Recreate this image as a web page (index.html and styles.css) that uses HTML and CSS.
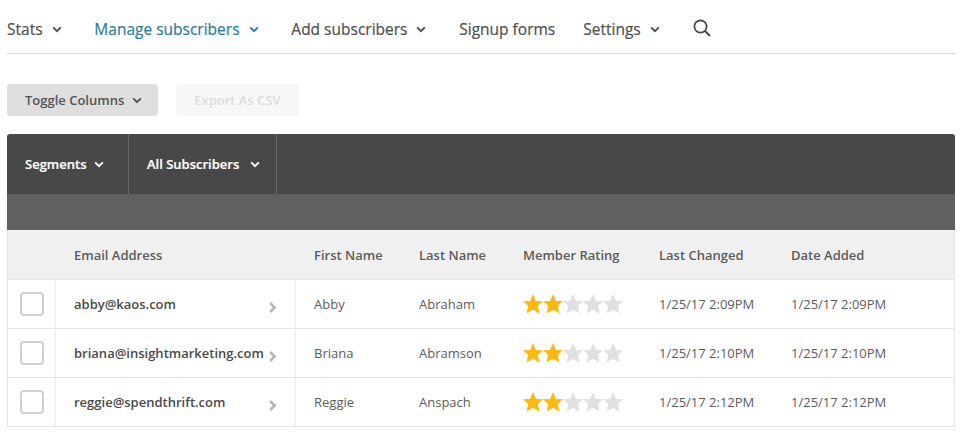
FILE: index.html
```html
<!DOCTYPE html>
<html lang="en">
<head>
<meta charset="utf-8">
<title>Manage subscribers</title>
<link rel="stylesheet" href="styles.css">
</head>
<body>
<svg class="defs" width="0" height="0" aria-hidden="true">
  <symbol id="chev" viewBox="0 0 10 7"><path d="M1.2 1.4 5 5.2 8.8 1.4" fill="none" stroke="currentColor" stroke-width="2"/></symbol>
  <symbol id="star" viewBox="0 0 20 20"><polygon points="10,0 13,6.9 20,7.2 14.8,12 16.5,19.6 10,15.7 3.5,19.6 5.2,12 0,7.2 7,6.9" fill="currentColor"/></symbol>
  <symbol id="right" viewBox="0 0 8 11"><path d="M1.2 1 5.7 5.5 1.2 10" fill="none" stroke="currentColor" stroke-width="2.5"/></symbol>
</svg>
<nav class="nav">
  <a class="nav-item">Stats<svg class="chev"><use href="#chev"/></svg></a>
  <a class="nav-item active">Manage subscribers<svg class="chev"><use href="#chev"/></svg></a>
  <a class="nav-item">Add subscribers<svg class="chev"><use href="#chev"/></svg></a>
  <a class="nav-item">Signup forms</a>
  <a class="nav-item">Settings<svg class="chev"><use href="#chev"/></svg></a>
  <svg class="search" viewBox="0 0 18 18"><circle cx="7.5" cy="7.5" r="6.1" fill="none" stroke="currentColor" stroke-width="1.7"/><path d="M12 12l5 5" stroke="currentColor" stroke-width="1.9" fill="none"/></svg>
</nav>
<div class="actions">
  <button class="btn">Toggle Columns<svg class="chev"><use href="#chev"/></svg></button>
  <button class="btn disabled">Export As CSV</button>
</div>
<section class="panel">
  <div class="bar">
    <div class="seg">Segments<svg class="chev"><use href="#chev"/></svg></div>
    <div class="seg">All Subscribers<svg class="chev"><use href="#chev"/></svg></div>
  </div>
  <div class="subbar"></div>
  <div class="row head">
    <div></div><div class="cell">Email Address</div><div class="cell">First Name</div><div class="cell">Last Name</div><div class="cell">Member Rating</div><div class="cell">Last Changed</div><div class="cell">Date Added</div>
  </div>
  <div class="row">
    <div class="check"><span class="box"></span></div>
    <div class="cell email">abby@kaos.com<svg class="right"><use href="#right"/></svg></div>
    <div class="cell">Abby</div><div class="cell">Abraham</div>
    <div class="cell stars"><svg class="star on"><use href="#star"/></svg><svg class="star on"><use href="#star"/></svg><svg class="star"><use href="#star"/></svg><svg class="star"><use href="#star"/></svg><svg class="star"><use href="#star"/></svg></div>
    <div class="cell">1/25/17 2:09PM</div><div class="cell">1/25/17 2:09PM</div>
  </div>
  <div class="row">
    <div class="check"><span class="box"></span></div>
    <div class="cell email">briana@insightmarketing.com<svg class="right"><use href="#right"/></svg></div>
    <div class="cell">Briana</div><div class="cell">Abramson</div>
    <div class="cell stars"><svg class="star on"><use href="#star"/></svg><svg class="star on"><use href="#star"/></svg><svg class="star"><use href="#star"/></svg><svg class="star"><use href="#star"/></svg><svg class="star"><use href="#star"/></svg></div>
    <div class="cell">1/25/17 2:10PM</div><div class="cell">1/25/17 2:10PM</div>
  </div>
  <div class="row">
    <div class="check"><span class="box"></span></div>
    <div class="cell email">reggie@spendthrift.com<svg class="right"><use href="#right"/></svg></div>
    <div class="cell">Reggie</div><div class="cell">Anspach</div>
    <div class="cell stars"><svg class="star on"><use href="#star"/></svg><svg class="star on"><use href="#star"/></svg><svg class="star"><use href="#star"/></svg><svg class="star"><use href="#star"/></svg><svg class="star"><use href="#star"/></svg></div>
    <div class="cell">1/25/17 2:12PM</div><div class="cell">1/25/17 2:12PM</div>
  </div>
</section>
</body>
</html>
```
FILE: styles.css
```css
* { box-sizing: border-box; }
html, body { margin: 0; background: #fff; }
body { width: 964px; height: 438px; overflow: hidden; padding: 0 9px 0 7px; font-family: "Open Sans", sans-serif; color: #5c5c5c; }
.defs { position: absolute; }
.nav { height: 54px; border-bottom: 1px solid #d9d9d9; display: flex; align-items: center; padding-top: 5px; color: #505050; }
.nav-item { display: flex; align-items: center; font-size: 15.5px; -webkit-text-stroke: 0.2px currentColor; line-height: 20px; margin-right: 28px; padding-bottom: 1px; }
.nav-item.active { color: #2b7d97; }
.chev { width: 10px; height: 7px; margin-left: 9px; margin-top: 1px; }
.nav-item .chev { margin-right: 4.8px; }
.search { width: 18px; height: 18px; margin-top: -3px; color: #444; }
.actions { display: flex; gap: 18px; margin-top: 30px; }
.btn { height: 32px; border: 0; border-radius: 3px; background: #dedede; color: #555; font: 600 13px "Open Sans", sans-serif; padding: 0 16px 0 18px; display: flex; align-items: center; }
.btn .chev { margin-left: 8px; }
.btn.disabled { background: #f7f7f7; color: #dcdcdc; padding: 0 18px; }
.panel { margin-top: 18px; width: 948px; }
.bar { height: 60px; background: #484848; border-radius: 3px 3px 0 0; display: flex; }
.seg { display: flex; align-items: center; padding: 0 24px 0 18px; border-right: 1px solid #666; color: #fff; font-size: 13px; font-weight: 600; -webkit-text-stroke: 0.2px #fff; }
.seg .chev { margin-left: 8px; }
.seg + .seg { padding: 0 16px 0 17.5px; }
.seg + .seg .chev { margin-left: 10.5px; }
.subbar { height: 36px; background: #606060; }
.row { display: grid; grid-template-columns: 47px 240px 105px 104px 136px 132px 1fr; height: 49px; border: 1px solid #e3e3e3; border-top: 0; align-items: stretch; font-size: 13px; }
.head { background: #f0f0f0; font-weight: 600; height: 50px; }
.cell { display: flex; align-items: center; padding-left: 18px; border-left: 1px solid transparent; white-space: nowrap; }
.row:not(.head) .cell:nth-child(2), .row:not(.head) .cell:nth-child(3) { border-left-color: #ececec; }
.check { display: flex; align-items: center; padding-left: 12px; }
.box { width: 24px; height: 24px; border: 2px solid #d0d0d0; border-radius: 4px; background: #fff; }
.email { font-weight: 600; color: #4a4a4a; position: relative; }
.right { position: absolute; left: 213px; top: 22px; width: 8px; height: 11px; color: #b5b5b5; }
.star { width: 20px; height: 20px; color: #e0e0e0; }
.star.on { color: #fdb913; }
```
